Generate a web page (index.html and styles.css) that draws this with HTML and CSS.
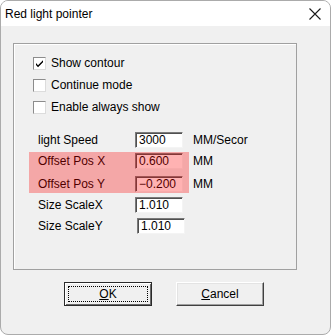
FILE: index.html
```html
<!DOCTYPE html>
<html>
<head>
<meta charset="utf-8">
<link rel="stylesheet" href="styles.css">
</head>
<body>
<div class="window">
  <div class="titlebar">
    <span class="title">Red light pointer</span>
    <svg class="close" width="12" height="12" viewBox="0 0 12 12"><path d="M0.5 0.5 L11.5 11.5 M11.5 0.5 L0.5 11.5" stroke="#1a1a1a" stroke-width="1.1" fill="none"/></svg>
  </div>
  <div class="content">
    <div class="group">
      <div class="check-row">
        <span class="box"><svg width="11" height="11" viewBox="0 0 11 11"><path d="M2 5 L4 7.2 L9 2.2 L9 4.2 L4 9.2 L2 7 Z" fill="#000"/></svg></span>
        <span>Show contour</span>
      </div>
      <div class="check-row">
        <span class="box"></span>
        <span>Continue mode</span>
      </div>
      <div class="check-row">
        <span class="box"></span>
        <span>Enable always show</span>
      </div>
      <div class="fields">
        <div class="field">
          <span class="label">light Speed</span>
          <span class="input">3000</span>
          <span class="unit">MM/Secor</span>
        </div>
        <div class="field">
          <span class="label">Offset Pos X</span>
          <span class="input">0.600</span>
          <span class="unit">MM</span>
        </div>
        <div class="field extra">
          <span class="label">Offset Pos Y</span>
          <span class="input">&minus;0.200</span>
          <span class="unit">MM</span>
        </div>
        <div class="field">
          <span class="label">Size ScaleX</span>
          <span class="input">1.010</span>
        </div>
        <div class="field">
          <span class="label">Size ScaleY</span>
          <span class="input shifted">1.010</span>
        </div>
      </div>
    </div>
    <div class="buttons">
      <div class="btn default"><span class="focus"><u>O</u>K</span></div>
      <div class="btn"><span class="face"><u>C</u>ancel</span></div>
    </div>
  </div>
  <div class="highlight"></div>
</div>
</body>
</html>
```
FILE: styles.css
```css
html, body {
  margin: 0;
  padding: 0;
  background: #ffffff;
}
.window {
  position: relative;
  width: 331px;
  height: 335px;
  box-sizing: border-box;
  border: 1px solid #ababab;
  border-radius: 8px;
  overflow: hidden;
  background: #f0f0f0;
  font-family: "Liberation Sans", Arial, sans-serif;
  font-size: 12px;
  color: #000;
}
.titlebar {
  height: 25px;
  background: #ffffff;
  display: flex;
  align-items: center;
  justify-content: space-between;
  padding: 0 9px 0 4px;
}
.title {
  font-size: 12px;
  line-height: 14px;
}
.close {
  display: block;
}
.content {
  padding: 17px 0 0 12px;
}
.group {
  width: 284px;
  height: 227px;
  box-sizing: border-box;
  border: 1px solid #a0a0a0;
  box-shadow: inset 1px 1px 0 #ffffff;
  padding: 8px 0 0 19px;
}
.check-row {
  height: 22px;
  display: flex;
  align-items: center;
  gap: 5px;
}
.box {
  width: 13px;
  height: 13px;
  box-sizing: border-box;
  border: 1px solid;
  border-color: #8c8c8c #dcdcdc #dcdcdc #8c8c8c;
  background: #ffffff;
  display: flex;
  align-items: center;
  justify-content: center;
}
.box svg {
  display: block;
}
.fields {
  margin-top: 14px;
  padding-left: 5px;
  display: flex;
  flex-direction: column;
  gap: 5px;
}
.field {
  height: 16px;
  display: flex;
  align-items: center;
}
.field.extra {
  margin-top: 2px;
}
.label {
  width: 97px;
}
.input {
  width: 48px;
  height: 16px;
  box-sizing: border-box;
  border: 1px solid;
  border-color: #7a7a7a #f4f4f4 #f4f4f4 #7a7a7a;
  box-shadow: inset 1px 1px 0 #505050;
  background: #ffffff;
  padding-left: 3px;
  line-height: 14px;
}
.input.shifted {
  margin-left: 2px;
}
.unit {
  margin-left: 10px;
}
.buttons {
  margin-top: 12px;
  padding-left: 51px;
  display: flex;
  gap: 24px;
}
.btn {
  width: 88px;
  height: 24px;
  box-sizing: border-box;
  border: 1px solid;
  border-color: #ffffff #404040 #404040 #ffffff;
  box-shadow: inset -1px -1px 0 #a0a0a0, inset 1px 1px 0 #e3e3e3;
  background: #f0f0f0;
  display: flex;
}
.btn.default {
  border: 1px solid #2a2a2a;
  box-shadow: inset 1px 1px 0 #ffffff, inset -1px -1px 0 #6a6a6a;
  padding: 3px;
}
.focus, .face {
  flex: 1;
  display: flex;
  align-items: center;
  justify-content: center;
  line-height: 14px;
}
.focus {
  border: 1px dotted #000;
}
.highlight {
  position: absolute;
  left: 28px;
  top: 151px;
  width: 160px;
  height: 41px;
  background: rgba(255, 0, 0, 0.3);
}
```
